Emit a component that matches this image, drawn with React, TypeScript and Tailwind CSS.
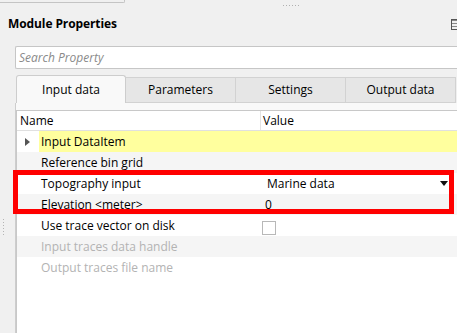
import { useState } from 'react';

type Row = {
  name: string;
  value?: string;
  kind?: 'group' | 'combo' | 'check' | 'text';
  disabled?: boolean;
};

const rows: Row[] = [
  { name: 'Input DataItem', kind: 'group' },
  { name: 'Reference bin grid' },
  { name: 'Topography input', value: 'Marine data', kind: 'combo' },
  { name: 'Elevation <meter>', value: '0', kind: 'text' },
  { name: 'Use trace vector on disk', kind: 'check' },
  { name: 'Input traces data handle', disabled: true },
  { name: 'Output traces file name', disabled: true },
];

const tabs = ['Input data', 'Parameters', 'Settings', 'Output data'];

const App = () => {
  const [active, setActive] = useState(0);

  return (
    <div
      className="relative w-[457px] h-[333px] overflow-hidden bg-[#f0f0f0] text-[12px] text-black"
      style={{ fontFamily: '"Open Sans", "Noto Sans", sans-serif' }}
    >
      {/* top edge of the docked tab above */}
      <div className="flex h-[12px]">
        <div className="w-[125px] h-[3px] border-b border-r border-[#c4c4c4] rounded-br-[2px] bg-[#f0f0f0]" />
        <div className="flex gap-[2px] ml-[158px] mt-[5px] h-[1px]">
          {[0, 1, 2, 3, 4, 5].map((i) => (
            <span key={i} className="w-[1px] h-[1px] bg-[#b0b0b0]" />
          ))}
        </div>
      </div>

      {/* title */}
      <div className="flex items-center justify-between h-[22px] pl-[8px] pt-[1px]">
        <span className="font-bold tracking-[-0.1px]">Module Properties</span>
        <span className="w-[6px] h-[11px] border border-[#555] border-r-0 mt-[2px] bg-[linear-gradient(#888_1px,transparent_1px)] bg-[length:100%_3px]" />
      </div>

      <div className="flex">
        {/* left splitter strip */}
        <div className="relative w-[15px] shrink-0">
          <div className="absolute left-[3px] top-[185px] flex flex-col gap-[2px]">
            {[0, 1, 2, 3, 4, 5].map((i) => (
              <span key={i} className="w-[1px] h-[1px] bg-[#b4b4b4]" />
            ))}
          </div>
        </div>

        <div className="flex-1 flex flex-col mt-[12px]">
          {/* search */}
          <div className="h-[23px] bg-white border border-r-0 border-[#c6c6c6] rounded-l-[2px] flex items-center pl-[3px]">
            <span className="italic text-[#8a8a8a]">Search Property</span>
          </div>

          {/* tabs */}
          <div className="flex items-end h-[34px] pl-[1px]">
            {tabs.map((t, i) => (
              <button
                key={t}
                onClick={() => setActive(i)}
                className={
                  i === active
                    ? 'w-[110px] h-[28px] bg-[#f9f9f9] border border-b-0 border-[#cdcdcd] rounded-t-[3px] flex items-center justify-center shrink-0'
                    : 'w-[110px] h-[26px] bg-[#e6e6e6] border border-l-0 border-[#d2d2d2] flex items-center justify-center shrink-0'
                }
              >
                {t}
              </button>
            ))}
          </div>

          {/* tab pane */}
          <div className="bg-[#f9f9f9] border-l border-[#cdcdcd] pt-[7px] h-[300px]">
            <div className="bg-white border-l border-t border-[#c8c8c8] h-full">
              {/* header */}
              <div className="flex h-[20px] border-b border-[#e0e0e0] bg-white">
                <div className="w-[244px] pl-[3px] flex items-center border-r border-[#e3e3e3]">Name</div>
                <div className="flex-1 pl-[2px] flex items-center">Value</div>
              </div>

              {rows.map((r, i) => (
                <div
                  key={r.name}
                  className={`flex h-[21px] items-center ${i % 2 === 1 ? 'bg-[#f5f5f5]' : 'bg-white'}`}
                >
                  <div className="w-[22px] h-full flex items-center justify-center shrink-0">
                    {r.kind === 'group' && (
                      <svg width="5" height="8" viewBox="0 0 5 8" className="ml-[-2px]">
                        <path d="M0 0 L5 4 L0 8 Z" fill="#555" />
                      </svg>
                    )}
                  </div>
                  <div
                    className={`h-full flex items-center pl-[2px] ${r.kind === 'group' ? 'flex-1 bg-[#ffff9e]' : 'w-[222px]'} ${r.disabled ? 'text-[#b3b3b3]' : ''}`}
                  >
                    {r.name}
                  </div>
                  {r.kind !== 'group' && (
                    <div className="flex-1 h-full flex items-center">
                      {r.kind === 'combo' && (
                        <div className="flex-1 flex items-center justify-between pl-[6px] pr-[9px]">
                          <span>{r.value}</span>
                          <svg width="8" height="5" viewBox="0 0 8 5">
                            <path d="M0 0 L8 0 L4 5 Z" fill="#111" />
                          </svg>
                        </div>
                      )}
                      {r.kind === 'text' && <span className="pl-[4px]">{r.value}</span>}
                      {r.kind === 'check' && (
                        <span className="ml-[1px] mt-[4px] w-[14px] h-[14px] border border-[#b8b8b8] bg-white" />
                      )}
                    </div>
                  )}
                </div>
              ))}
            </div>
          </div>
        </div>
      </div>

      {/* red annotation box */}
      <div className="absolute left-[13px] top-[170px] w-[441px] h-[44px] border-[5px] border-[#ff0000] pointer-events-none" />
    </div>
  );
};

export default App;
